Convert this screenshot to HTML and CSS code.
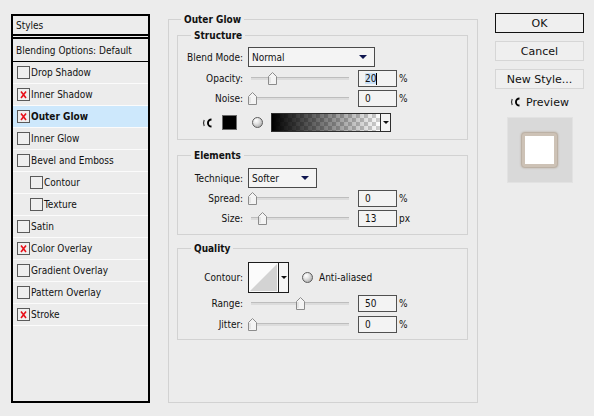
FILE: index.html
```html
<!DOCTYPE html>
<html>
<head>
<meta charset="utf-8">
<link rel="stylesheet" href="styles.css">
</head>
<body>
<div class="dialog">
  <div class="styles-panel">
    <div class="sp-head">Styles</div>
    <div class="sp-blend">Blending Options: Default</div>
    <div class="sp-item"><span class="cb"></span>Drop Shadow</div>
    <div class="sp-item"><span class="cb on"><svg width="11" height="11" viewBox="0 0 11 11"><path d="M3 2.5 L8 9 M8 2.5 L3 9" stroke="#e8101a" stroke-width="1.6" fill="none"/></svg></span>Inner Shadow</div>
    <div class="sp-item active"><span class="cb on"><svg width="11" height="11" viewBox="0 0 11 11"><path d="M3 2.5 L8 9 M8 2.5 L3 9" stroke="#e8101a" stroke-width="1.6" fill="none"/></svg></span>Outer Glow</div>
    <div class="sp-item"><span class="cb"></span>Inner Glow</div>
    <div class="sp-item"><span class="cb"></span>Bevel and Emboss</div>
    <div class="sp-item sub"><span class="cb"></span>Contour</div>
    <div class="sp-item sub"><span class="cb"></span>Texture</div>
    <div class="sp-item"><span class="cb"></span>Satin</div>
    <div class="sp-item"><span class="cb on"><svg width="11" height="11" viewBox="0 0 11 11"><path d="M3 2.5 L8 9 M8 2.5 L3 9" stroke="#e8101a" stroke-width="1.6" fill="none"/></svg></span>Color Overlay</div>
    <div class="sp-item"><span class="cb"></span>Gradient Overlay</div>
    <div class="sp-item"><span class="cb"></span>Pattern Overlay</div>
    <div class="sp-item"><span class="cb on"><svg width="11" height="11" viewBox="0 0 11 11"><path d="M3 2.5 L8 9 M8 2.5 L3 9" stroke="#e8101a" stroke-width="1.6" fill="none"/></svg></span>Stroke</div>
  </div>

  <fieldset class="main">
    <legend class="lg-main">Outer Glow</legend>

    <fieldset class="group g-structure">
      <legend>Structure</legend>
      <div class="row r-blend">
        <span class="lbl">Blend Mode:</span>
        <div class="select sel-blend">Normal<span class="arrow"></span></div>
      </div>
      <div class="row r-opacity">
        <span class="lbl">Opacity:</span>
        <div class="slider"><span class="track"></span><svg class="thumb" style="left:20px" width="9" height="13" viewBox="0 0 9 13"><path d="M0.5 12.5 V4.5 L4.5 0.5 L8.5 4.5 V12.5 Z" fill="#f4f4f4" stroke="#8c8c8c"/><path d="M2 5 V11" stroke="#d6d6d6"/></svg></div>
        <div class="num"><span class="selected">20</span><span class="caret"></span></div>
        <span class="unit">%</span>
      </div>
      <div class="row r-noise">
        <span class="lbl">Noise:</span>
        <div class="slider"><span class="track"></span><svg class="thumb" style="left:0px" width="9" height="13" viewBox="0 0 9 13"><path d="M0.5 12.5 V4.5 L4.5 0.5 L8.5 4.5 V12.5 Z" fill="#f4f4f4" stroke="#8c8c8c"/><path d="M2 5 V11" stroke="#d6d6d6"/></svg></div>
        <div class="num">0</div>
        <span class="unit">%</span>
      </div>
      <div class="row r-icons">
        <svg class="glow-ico" width="10" height="12" viewBox="0 0 10 12"><path d="M2.2 3 Q0.8 6 2.2 9" stroke="#333" stroke-width="1.2" fill="none"/><path d="M9.5 1.5 A4.5 4.5 0 0 0 9.5 10.5 L9.5 8.6 A2.6 2.6 0 0 1 9.5 3.4 Z" fill="#000"/></svg>
        <span class="swatch"></span>
        <span class="sphere"></span>
        <div class="gradient"><span class="grad-fill"></span><span class="grad-arrow"><span class="arrow small"></span></span></div>
      </div>
    </fieldset>

    <fieldset class="group g-elements">
      <legend>Elements</legend>
      <div class="row r-tech">
        <span class="lbl">Technique:</span>
        <div class="select sel-tech">Softer<span class="arrow"></span></div>
      </div>
      <div class="row r-spread">
        <span class="lbl">Spread:</span>
        <div class="slider"><span class="track"></span><svg class="thumb" style="left:0px" width="9" height="13" viewBox="0 0 9 13"><path d="M0.5 12.5 V4.5 L4.5 0.5 L8.5 4.5 V12.5 Z" fill="#f4f4f4" stroke="#8c8c8c"/><path d="M2 5 V11" stroke="#d6d6d6"/></svg></div>
        <div class="num">0</div>
        <span class="unit">%</span>
      </div>
      <div class="row r-size">
        <span class="lbl">Size:</span>
        <div class="slider"><span class="track"></span><svg class="thumb" style="left:10px" width="9" height="13" viewBox="0 0 9 13"><path d="M0.5 12.5 V4.5 L4.5 0.5 L8.5 4.5 V12.5 Z" fill="#f4f4f4" stroke="#8c8c8c"/><path d="M2 5 V11" stroke="#d6d6d6"/></svg></div>
        <div class="num">13</div>
        <span class="unit">px</span>
      </div>
    </fieldset>

    <fieldset class="group g-quality">
      <legend>Quality</legend>
      <div class="row r-contour">
        <span class="lbl">Contour:</span>
        <div class="contour">
          <svg class="contour-graph" width="29" height="29" viewBox="0 0 29 29"><rect width="29" height="29" fill="#fbfbfb"/><path d="M1 28 L28 1 V28 Z" fill="#d3d3d3"/></svg>
          <span class="contour-arrow"><span class="arrow small"></span></span>
        </div>
        <span class="sphere aa"></span>
        <span class="aa-label">Anti-aliased</span>
      </div>
      <div class="row r-range">
        <span class="lbl">Range:</span>
        <div class="slider"><span class="track"></span><svg class="thumb" style="left:48px" width="9" height="13" viewBox="0 0 9 13"><path d="M0.5 12.5 V4.5 L4.5 0.5 L8.5 4.5 V12.5 Z" fill="#f4f4f4" stroke="#8c8c8c"/><path d="M2 5 V11" stroke="#d6d6d6"/></svg></div>
        <div class="num">50</div>
        <span class="unit">%</span>
      </div>
      <div class="row r-jitter">
        <span class="lbl">Jitter:</span>
        <div class="slider"><span class="track"></span><svg class="thumb" style="left:0px" width="9" height="13" viewBox="0 0 9 13"><path d="M0.5 12.5 V4.5 L4.5 0.5 L8.5 4.5 V12.5 Z" fill="#f4f4f4" stroke="#8c8c8c"/><path d="M2 5 V11" stroke="#d6d6d6"/></svg></div>
        <div class="num">0</div>
        <span class="unit">%</span>
      </div>
    </fieldset>
  </fieldset>

  <div class="side">
    <div class="btn btn-ok">OK</div>
    <div class="btn">Cancel</div>
    <div class="btn">New Style...</div>
    <div class="preview-label">
      <svg class="glow-ico" width="10" height="12" viewBox="0 0 10 12"><path d="M2.2 3 Q0.8 6 2.2 9" stroke="#333" stroke-width="1.2" fill="none"/><path d="M9.5 1.5 A4.5 4.5 0 0 0 9.5 10.5 L9.5 8.6 A2.6 2.6 0 0 1 9.5 3.4 Z" fill="#000"/></svg>
      <span>Preview</span>
    </div>
    <div class="preview-box"><span class="preview-sq"></span></div>
  </div>
</div>
</body>
</html>
```

FILE: styles.css
```css
html, body {
  margin: 0;
  padding: 0;
  background: #ececec;
}
body {
  font-family: "DejaVu Sans Condensed", "Liberation Sans", sans-serif;
  font-size: 10px;
  color: #111;
}
.dialog {
  display: flex;
  align-items: flex-start;
  padding: 13px 0 0 11px;
}

/* ---------- left styles list ---------- */
.styles-panel {
  box-sizing: border-box;
  width: 139px;
  height: 389px;
  margin-top: 1px;
  border: 2px solid #000;
  display: flex;
  flex-direction: column;
}
.sp-head {
  height: 18px;
  padding-left: 3px;
  display: flex;
  align-items: center;
  border-bottom: 2px solid #000;
}
.sp-blend {
  margin-top: 1px;
  height: 22px;
  padding-left: 3px;
  display: flex;
  align-items: center;
  border-top: 2px solid #000;
  border-bottom: 1px solid #000;
}
.sp-item {
  height: 21px;
  border-bottom: 1px solid #fbfbfb;
  display: flex;
  align-items: center;
  padding-left: 4px;
}
.sp-item.sub {
  padding-left: 17px;
}
.sp-item.active {
  background: #cde8fc;
  font-weight: bold;
}
.cb {
  box-sizing: border-box;
  width: 13px;
  height: 13px;
  border: 1px solid #5a5a5a;
  background: #efefef;
  margin-right: 1px;
  display: flex;
  align-items: center;
  justify-content: center;
  flex: none;
}

/* ---------- main fieldsets ---------- */
fieldset {
  margin: 0;
  padding: 0;
  min-inline-size: 0;
  border: 1px solid #d2d2d2;
}
legend {
  padding: 0 3px;
  line-height: 13px;
  font-weight: bold;
}
.main {
  box-sizing: border-box;
  width: 310px;
  height: 390px;
  margin-left: 18px;
}
.lg-main {
  margin-left: 12px;
}
.group {
  margin: 0 9px 0 8px;
}
.group legend {
  margin-left: 13px;
}
.g-structure {
  margin-top: 3px;
  padding: 5px 0 7px 0;
}
.g-elements {
  margin-top: 9px;
  padding: 6px 0 7px 0;
}
.g-quality {
  margin-top: 7px;
  padding: 7px 0 6px 0;
}

.row {
  display: flex;
  align-items: center;
}
.lbl {
  width: 65px;
  margin-right: 5px;
  text-align: right;
  flex: none;
}
.r-opacity, .r-noise { margin-top: 3px; }
.r-icons { margin-top: 6px; height: 19px; }
.r-spread { margin-top: 2px; }
.r-size { margin-top: 3px; }
.r-range { margin-top: 2px; }
.r-jitter { margin-top: 4px; }

.select {
  box-sizing: border-box;
  height: 20px;
  border: 1px solid #4a4a4a;
  background: #f4f4f4;
  padding-left: 3px;
  display: flex;
  align-items: center;
  justify-content: space-between;
  padding-right: 7px;
}
.sel-blend { width: 127px; }
.sel-tech { width: 69px; }
.arrow {
  width: 0;
  height: 0;
  border-left: 4px solid transparent;
  border-right: 4px solid transparent;
  border-top: 4px solid #0f1650;
}
.arrow.small {
  border-left-width: 3px;
  border-right-width: 3px;
  border-top: 3px solid #111;
}

.slider {
  position: relative;
  width: 104px;
  height: 17px;
  flex: none;
}
.track {
  position: absolute;
  left: 3px;
  right: 3px;
  top: 7px;
  height: 2px;
  background: #dcdcdc;
  border-top: 1px solid #bdbdbd;
}
.thumb {
  position: absolute;
  top: 2px;
  margin-left: 0;
}
.num {
  box-sizing: border-box;
  width: 39px;
  height: 17px;
  margin-left: 6px;
  border: 1px solid #505050;
  background: #f3f3f3;
  padding-left: 6px;
  display: flex;
  align-items: center;
  flex: none;
}
.selected {
  background: #c9e0f7;
}
.caret {
  width: 1px;
  height: 12px;
  background: #000;
}
.unit {
  margin-left: 2px;
}

.glow-ico {
  display: block;
  flex: none;
}
.r-icons .glow-ico {
  margin-left: 24px;
}
.swatch {
  box-sizing: border-box;
  width: 15px;
  height: 15px;
  margin-left: 10px;
  background: #000;
  border: 1px solid #6a6a6a;
  flex: none;
}
.sphere {
  box-sizing: border-box;
  width: 11px;
  height: 11px;
  border-radius: 50%;
  border: 1px solid #5c5c5c;
  background: radial-gradient(circle at 35% 30%, #ffffff 0%, #e4e4e4 35%, #9a9a9a 100%);
  flex: none;
}
.r-icons .sphere {
  margin-left: 15px;
}
.gradient {
  box-sizing: border-box;
  width: 120px;
  height: 19px;
  margin-left: 8px;
  border: 1px solid #2e2e2e;
  display: flex;
  background: #fff;
}
.grad-fill {
  flex: 1;
  background:
    linear-gradient(to right, #000 0%, rgba(0,0,0,0) 100%),
    conic-gradient(#cfcfcf 25%, #ffffff 0 50%, #cfcfcf 0 75%, #ffffff 0) 0 0 / 8px 8px;
}
.grad-arrow {
  width: 9px;
  border-left: 1px solid #2e2e2e;
  background: #f4f4f4;
  display: flex;
  align-items: center;
  justify-content: center;
}

.contour {
  box-sizing: border-box;
  width: 41px;
  height: 31px;
  border: 1px solid #1c1c1c;
  display: flex;
  background: #f6f6f6;
  flex: none;
}
.contour-graph {
  display: block;
}
.contour-arrow {
  flex: 1;
  border-left: 1px solid #1c1c1c;
  display: flex;
  align-items: center;
  justify-content: center;
}
.sphere.aa {
  margin-left: 13px;
}
.aa-label {
  margin-left: 6px;
}

/* ---------- right column ---------- */
.side {
  width: 89px;
  margin-left: 17px;
  display: flex;
  flex-direction: column;
  align-items: center;
  font-family: "DejaVu Sans", "Liberation Sans", sans-serif;
  font-size: 11px;
}
.btn {
  box-sizing: border-box;
  width: 89px;
  height: 20px;
  margin-bottom: 8px;
  border: 1px solid #d6d6d6;
  background: #efefef;
  display: flex;
  align-items: center;
  justify-content: center;
}
.btn-ok {
  border-color: #111;
}
.preview-label {
  display: flex;
  align-items: center;
  gap: 6px;
  height: 14px;
  margin-top: -2px;
}
.preview-box {
  box-sizing: border-box;
  width: 66px;
  height: 66px;
  margin-top: 8px;
  background: #d9d9d9;
  border: 1px solid #e2e2e2;
  display: flex;
  align-items: center;
  justify-content: center;
}
.preview-sq {
  box-sizing: border-box;
  width: 35px;
  height: 34px;
  background: #fff;
  border: 3px solid #cdc2b6;
  border-radius: 3px;
  box-shadow: 0 0 2px 1px #b2a393;
}
```
